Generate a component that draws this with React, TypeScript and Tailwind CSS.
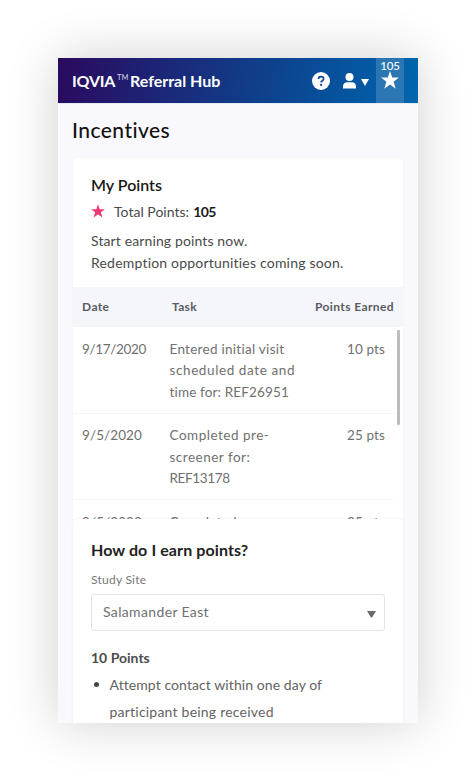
import React from 'react';

const STAR = 'M12 0l2.9 8.4H24l-7.2 5.3 2.8 9.1L12 17.3l-7.6 5.5 2.8-9.1L0 8.4h9.1z';

type Row = { date: string; lines: string[]; points: string };

const rows: Row[] = [
  { date: '9/17/2020', lines: ['Entered initial visit', 'scheduled date and', 'time for: REF26951'], points: '10 pts' },
  { date: '9/5/2020', lines: ['Completed pre-', 'screener for:', 'REF13178'], points: '25 pts' },
  { date: '9/5/2020', lines: ['Completed'], points: '25 pts' },
];

function Header() {
  return (
    <header className="flex h-[45px] shrink-0 items-center bg-linear-[100deg,#2a0a5e_0%,#1e2274_25%,#123a86_50%,#07509b_75%,#0066ae_100%] pl-[14px] text-white">
      <h1 className="flex h-[22px] items-center text-[16px] font-bold leading-[22px]">
        <span className="w-[45px] tracking-[-0.2px]">IQVIA</span>
        <span className="mb-[6px] w-[13px] text-[7.5px] font-normal leading-[10px] opacity-80">TM</span>
        <span className="tracking-[0px]">Referral Hub</span>
      </h1>
      <div className="ml-auto flex h-full items-center">
        <svg className="mr-[13px] h-[18px] w-[18px]" viewBox="0 0 18 18">
          <circle cx="9" cy="9" r="9" fill="#fff" />
          <path d="M6.5 7.1C6.5 5.5 7.5 4.7 9 4.7s2.6.9 2.6 2.2c0 1.8-2.5 1.8-2.5 3.6" fill="none" stroke="#0b4792" strokeWidth="1.7" />
          <circle cx="9.1" cy="12.9" r="1.1" fill="#0b4792" />
        </svg>
        <svg className="h-4 w-[13px]" viewBox="0 0 13 16">
          <circle cx="6.5" cy="4" r="4" fill="#fff" />
          <path d="M0 15.5v-2C0 10.7 2 9.3 4 9.3h5c2 0 4 1.4 4 4.2v2z" fill="#fff" />
        </svg>
        <svg className="ml-[5px] mr-[7px] mt-[3px] h-[7px] w-2" viewBox="0 0 8 7">
          <path d="M0 0h8L4 7z" fill="#fff" />
        </svg>
        <div className="mr-[14px] flex h-full w-7 flex-col items-center bg-[#2c76b4]">
          <span className="mt-px h-[12px] text-[11.5px] font-medium leading-[13px] tracking-[-0.2px]">105</span>
          <svg className="mr-px h-[18px] w-[18px]" viewBox="0 0 24 23" preserveAspectRatio="none">
            <path d={STAR} fill="#fff" />
          </svg>
        </div>
      </div>
    </header>
  );
}

function PointsTable() {
  return (
    <div className="flex h-[232px] flex-col">
      <div className="flex h-10 shrink-0 items-center bg-[#f5f6fc] pl-[9px] pr-[9px] text-[12px] font-bold leading-5 text-[#5b5b5f]">
        <span className="w-[90px] tracking-[0.4px]">Date</span>
        <span className="tracking-[0.3px]">Task</span>
        <span className="ml-auto tracking-[0.4px]">Points Earned</span>
      </div>
      <div className="flex min-h-0 flex-1 overflow-hidden">
        <div className="w-[321px]">
          {rows.map((row, i) => (
            <div key={i} className="flex h-[86.5px] border-b border-[#f5f5f7] pl-[9px] pr-[9px] pt-[11.5px] text-[13.5px] leading-[21.6px] text-[#707070]">
              <span className={`w-[87.5px] ${i === 0 ? 'tracking-[-0.35px]' : 'tracking-[0.1px]'}`}>{row.date}</span>
              <span className={i === 0 ? 'tracking-[0.28px]' : 'tracking-[0.25px]'}>
                {row.lines.map((line) => (
                  <span key={line} className={`block whitespace-nowrap ${line === 'scheduled date and' ? 'tracking-[0.6px]' : line.startsWith('REF') ? 'tracking-[-0.35px]' : line.includes('REF') ? 'tracking-[0.15px]' : line === 'screener for:' || line === 'Completed pre-' ? 'tracking-[0.5px]' : ''}`}>{line}</span>
                ))}
              </span>
              <span className="ml-auto tracking-[0.1px]">{row.points}</span>
            </div>
          ))}
        </div>
        <div className="ml-[3px] mt-[3px] h-[95px] w-[3px] rounded-[1px] bg-[#bdbdbd]" />
      </div>
    </div>
  );
}

export default function App() {
  return (
    <div className="h-[781px] w-[476px] overflow-hidden bg-white pl-[58px] pt-[58px] font-[Lato,'Open_Sans',sans-serif]">
      <main className="flex h-[665px] w-[360px] flex-col overflow-hidden bg-[#f9f9fd] shadow-[0_0_48px_rgba(0,0,0,0.19)]">
        <Header />
        <div className="flex min-h-0 flex-1 flex-col border-t border-[#e2edf7] px-[15px]">
          <h2 className="-ml-px mt-[11px] h-[43px] text-[21px] font-medium leading-[30px] tracking-[0.45px] text-[#121212]">Incentives</h2>
          <section className="flex h-[361px] shrink-0 flex-col rounded-t-[4px] bg-white shadow-[0_0_2px_rgba(40,40,80,0.07)]">
            <div className="h-[129px] px-[18px] pt-[15px] text-[14px] text-[#4a4a4a]">
              <h3 className="text-[16px] font-semibold leading-[23px] text-[#191919]">My Points</h3>
              <div className="mt-[4px] flex h-[22px] items-center">
                <svg className="mb-px mr-[9px] h-[14px] w-[14px]" viewBox="0 0 24 23">
                  <path d={STAR} fill="#eb3971" />
                </svg>
                <span className="tracking-[0.02px]">Total Points:</span>
                <b className="ml-1 tracking-[-0.5px] text-[#1c1c1c]">105</b>
              </div>
              <p className="mt-[8px] whitespace-nowrap leading-[21.5px] tracking-[0.2px]"><span className="tracking-[0.12px]">Start earning points now.</span><br />Redemption opportunities coming soon.</p>
            </div>
            <PointsTable />
          </section>
          <section className="min-h-0 flex-1 rounded-t-[4px] bg-white px-[18px] pt-[19px] text-[#636363] shadow-[0_0_3px_rgba(40,40,80,0.08)]">
            <h3 className="text-[16px] font-bold leading-[23px] tracking-[0.1px] text-[#222]">How do I earn points?</h3>
            <label className="mt-[9px] block h-5 text-[12px] leading-5 tracking-[0.25px] text-[#777]">Study Site</label>
            <div className="mt-[4px] flex h-[37px] w-[294px] items-center justify-between rounded-[3px] border-[1.5px] border-[#e4e4e4] pl-[11px] pr-[8px] text-[14px] text-[#707070]">
              <span className="mb-[2px] tracking-[0.35px]">Salamander East</span>
              <svg className="mt-[3px] h-[7px] w-[9px]" viewBox="0 0 9 7"><path d="M0 0h9L5 6.5H4z" fill="#6b6b6b" /></svg>
            </div>
            <h4 className="mt-[16px] text-[14px] font-bold leading-[22px] text-[#4c4c4c]">10 Points</h4>
            <ul className="mt-[2px] text-[14px] leading-[27px]">
              <li className="flex">
                <span className="ml-[2.5px] mr-[11px] mt-[11px] h-[5px] w-[5px] shrink-0 rounded-full bg-[#444]" />
                <span className="whitespace-nowrap"><span className="tracking-[0.08px]">Attempt contact within one day of</span><br /><span className="tracking-[0.22px]">participant being received</span></span>
              </li>
            </ul>
          </section>
        </div>
      </main>
    </div>
  );
}
